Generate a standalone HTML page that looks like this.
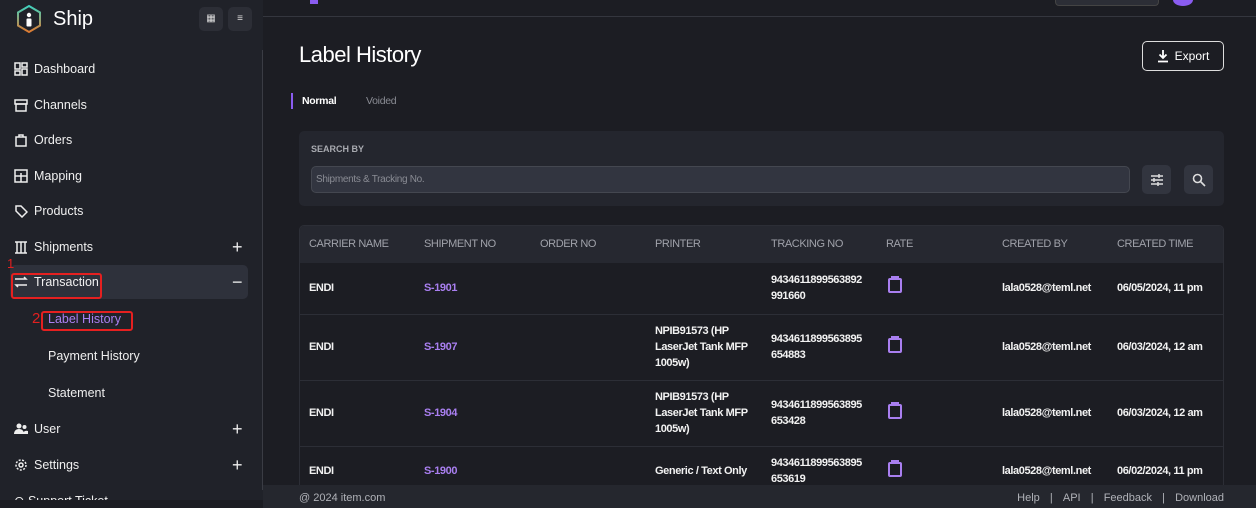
<!DOCTYPE html><html><head><style>
*{margin:0;padding:0;box-sizing:border-box}
body{width:1256px;height:508px;overflow:hidden;background:#1c1d23;font-family:"Liberation Sans",sans-serif;color:#fff;position:relative}
.sb{position:absolute;left:0;top:0;width:263px;height:508px;background:#202229}
.vl{position:absolute;left:262px;top:50px;width:1px;height:440px;background:#3a3c44}
.logo{position:absolute;left:15px;top:4px}
.ship{position:absolute;left:53px;top:8px;font-size:20px}
.tb{position:absolute;top:7px;width:24px;height:24px;background:#2c2e36;border-radius:5px;color:#ddd;font-size:10px;text-align:center;line-height:24px}
.ni{position:absolute;left:14px;font-size:12.5px;color:#f0f0f0;display:flex;align-items:center;gap:6px}
.ni svg{width:14px;height:14px}
.plus{position:absolute;left:232px;font-size:18px;color:#eee;font-weight:300}
.sub{position:absolute;left:48px;font-size:12.5px;color:#eee}
.top{position:absolute;left:263px;top:0;right:0;height:17px;border-bottom:1px solid #34363e;background:#1c1d23}
h1{position:absolute;left:299px;top:42px;font-size:22px;font-weight:400;letter-spacing:-.5px}
.exp{position:absolute;left:1142px;top:41px;width:82px;height:30px;border:1px solid #ddd;border-radius:5px;font-size:12px;display:flex;align-items:center;justify-content:center;gap:6px}
.card{position:absolute;left:299px;top:131px;width:925px;height:75px;background:#24262e;border-radius:5px}
.inp{position:absolute;left:311px;top:166px;width:819px;height:27px;background:#323540;border:1px solid #444750;border-radius:5px;font-size:10px;color:#8a8c94;padding:7px 4px;letter-spacing:-.3px}
.ib{position:absolute;top:165px;width:29px;height:29px;background:#32353f;border-radius:5px;display:flex;align-items:center;justify-content:center}
.tbl{position:absolute;left:299px;top:225px;width:925px;height:265px;border:1px solid #2c2e36;border-radius:5px;overflow:hidden}
.th{position:absolute;left:0;top:0;width:100%;height:37px;background:#262830}
.c{position:absolute;font-size:11px;letter-spacing:-.4px;line-height:16px}
.h{color:#a0a2aa;top:10px}
.row{position:absolute;left:0;width:100%;border-top:1px solid #2c2e36}
.b{font-weight:bold;color:#f2f2f2}
.p{color:#a97ff0;font-weight:bold}
.foot{position:absolute;left:263px;top:485px;right:0;height:23px;background:#25272e;font-size:11px;color:#b0b2b8}
</style></head><body>
<div class="sb"></div><div class="vl"></div>
<svg class="logo" width="28" height="30" viewBox="0 0 28 30"><defs><linearGradient id="g" x1="0" y1="0" x2="0" y2="1"><stop offset="0" stop-color="#3ed3c0"/><stop offset="1" stop-color="#e07a30"/></linearGradient></defs><path d="M14 2L25 8.5V21.5L14 28L3 21.5V8.5Z" fill="none" stroke="url(#g)" stroke-width="2"/><circle cx="14" cy="11" r="2.2" fill="#fff"/><rect x="11.5" y="14.5" width="5" height="8" rx="1" fill="#fff"/></svg>
<div class="ship">Ship</div>
<div class="tb" style="left:199px">▦</div><div class="tb" style="left:228px">≡</div>
<div class="ni" style="top:62px"><svg viewBox="0 0 14 14" fill="none" stroke="#eee" stroke-width="1.5"><rect x="1" y="1" width="5" height="6"/><rect x="8" y="1" width="5" height="4"/><rect x="1" y="9" width="5" height="4"/><rect x="8" y="7" width="5" height="6"/></svg>Dashboard</div>
<div class="ni" style="top:98px"><svg viewBox="0 0 14 14" fill="none" stroke="#eee" stroke-width="1.5"><rect x="1" y="2" width="12" height="4"/><rect x="2" y="6" width="10" height="7"/></svg>Channels</div>
<div class="ni" style="top:133px"><svg viewBox="0 0 14 14" fill="none" stroke="#eee" stroke-width="1.5"><rect x="2" y="4" width="10" height="9"/><path d="M5 4V2h4v2"/></svg>Orders</div>
<div class="ni" style="top:169px"><svg viewBox="0 0 14 14" fill="none" stroke="#eee" stroke-width="1.5"><rect x="1" y="1" width="12" height="12"/><path d="M1 7h12M7 4v9"/></svg>Mapping</div>
<div class="ni" style="top:204px"><svg viewBox="0 0 14 14" fill="none" stroke="#eee" stroke-width="1.5"><path d="M2 2h5l6 6-5 5-6-6z"/></svg>Products</div>
<div class="ni" style="top:240px"><svg viewBox="0 0 14 14" fill="none" stroke="#eee" stroke-width="1.5"><path d="M1 2h12M1 13h12M3 2v11M7 2v11M11 2v11"/></svg>Shipments</div>
<div class="plus" style="top:237px">+</div>
<div style="position:absolute;left:10px;top:265px;width:238px;height:34px;background:#2e313b;border-radius:5px"></div>
<div style="position:absolute;left:7px;top:256px;color:#e02020;font-size:13px">1</div>
<div style="position:absolute;left:11px;top:273px;width:91px;height:26px;border:2px solid #e52020;border-radius:3px"></div>
<div class="ni" style="top:275px"><svg viewBox="0 0 14 14" fill="none" stroke="#eee" stroke-width="1.5"><path d="M1 4h11l-2-2M13 10H2l2 2"/></svg>Transaction</div>
<div class="plus" style="top:272px">−</div>
<div style="position:absolute;left:32px;top:310px;color:#e02020;font-size:15px">2</div>
<div style="position:absolute;left:41px;top:311px;width:92px;height:20px;border:2px solid #e52020;border-radius:3px"></div>
<div class="sub" style="top:312px;color:#a97ff0">Label History</div>
<div class="sub" style="top:349px">Payment History</div>
<div class="sub" style="top:386px">Statement</div>
<div class="ni" style="top:422px"><svg viewBox="0 0 14 14" fill="#eee"><circle cx="5" cy="4" r="2.5"/><path d="M0 12c0-3 2-5 5-5s5 2 5 5z"/><circle cx="10.5" cy="5" r="2"/><path d="M9 12c0-2 2-4 5-3v3z"/></svg>User</div>
<div class="plus" style="top:419px">+</div>
<div class="ni" style="top:458px"><svg viewBox="0 0 14 14" fill="none" stroke="#eee" stroke-width="1.5"><circle cx="7" cy="7" r="2"/><circle cx="7" cy="7" r="5" stroke-dasharray="2 1.5"/></svg>Settings</div>
<div class="plus" style="top:455px">+</div>
<div style="position:absolute;left:0;top:490px;width:263px;height:11px;overflow:hidden"><div class="ni" style="top:3px">⊙ Support Ticket</div></div>
<div style="position:absolute;left:0;top:500px;width:263px;height:8px;background:#1c1d23"></div>
<div class="top"><div style="position:absolute;left:47px;top:0;width:8px;height:4px;background:#8a5cf0"></div><div style="position:absolute;left:792px;top:0;width:104px;height:6px;background:#2c2e36;border:1px solid #444;border-top:0;border-radius:0 0 4px 4px"></div><div style="position:absolute;left:910px;top:-6px;width:20px;height:12px;background:#8a5cf0;border-radius:50%"></div></div>
<h1>Label History</h1>
<div class="exp"><svg width="12" height="14" viewBox="0 0 12 14" fill="none" stroke="#fff" stroke-width="1.8"><path d="M6 1v8M2.5 5.5L6 9l3.5-3.5M1 12.5h10"/></svg>Export</div>
<div style="position:absolute;left:291px;top:93px;width:2px;height:16px;background:#8a5cf0"></div>
<div style="position:absolute;left:302px;top:95px;font-size:10.5px;font-weight:bold;letter-spacing:-.3px">Normal</div>
<div style="position:absolute;left:366px;top:95px;font-size:10.5px;color:#8a8c94;letter-spacing:-.3px">Voided</div>
<div class="card"></div>
<div style="position:absolute;left:311px;top:144px;font-size:9px;font-weight:bold;color:#a8aab0">SEARCH BY</div>
<div class="inp">Shipments &amp; Tracking No.</div>
<div class="ib" style="left:1142px"><svg width="14" height="14" viewBox="0 0 14 14" stroke="#ddd" stroke-width="1.5"><path d="M1 3h12M1 7h12M1 11h12M9 1v4M4 5v4M8 9v4"/></svg></div>
<div class="ib" style="left:1184px"><svg width="14" height="14" viewBox="0 0 14 14" fill="none" stroke="#ddd" stroke-width="1.6"><circle cx="5.5" cy="5.5" r="4"/><path d="M8.5 8.5L13 13"/></svg></div>
<div class="tbl">
<div class="th"></div>
<div class="c h" style="left:9px">CARRIER NAME</div><div class="c h" style="left:124px">SHIPMENT NO</div><div class="c h" style="left:240px">ORDER NO</div><div class="c h" style="left:355px">PRINTER</div><div class="c h" style="left:471px">TRACKING NO</div><div class="c h" style="left:586px">RATE</div><div class="c h" style="left:702px">CREATED BY</div><div class="c h" style="left:817px">CREATED TIME</div>
<div class="row" style="top:37px;height:51px;border-top:0"><div class="c b" style="left:9px;top:17px">ENDI</div><div class="c p" style="left:124px;top:17px">S-1901</div><div class="c b" style="left:471px;top:9px">9434611899563892<br>991660</div><svg class="c" style="left:588px;top:13px" width="14" height="17" viewBox="0 0 14 17" fill="none" stroke="#a97ff0" stroke-width="2"><rect x="1" y="3" width="12" height="13" rx="1"/><path d="M4 3V1h6v2"/></svg><div class="c b" style="left:702px;top:17px">lala0528@teml.net</div><div class="c b" style="left:817px;top:17px">06/05/2024, 11 pm</div></div>
<div class="row" style="top:88px;height:66px"><div class="c b" style="left:9px;top:24px">ENDI</div><div class="c p" style="left:124px;top:24px">S-1907</div><div class="c b" style="left:355px;top:8px">NPIB91573 (HP<br>LaserJet Tank MFP<br>1005w)</div><div class="c b" style="left:471px;top:16px">9434611899563895<br>654883</div><svg class="c" style="left:588px;top:21px" width="14" height="17" viewBox="0 0 14 17" fill="none" stroke="#a97ff0" stroke-width="2"><rect x="1" y="3" width="12" height="13" rx="1"/><path d="M4 3V1h6v2"/></svg><div class="c b" style="left:702px;top:24px">lala0528@teml.net</div><div class="c b" style="left:817px;top:24px">06/03/2024, 12 am</div></div>
<div class="row" style="top:154px;height:66px"><div class="c b" style="left:9px;top:24px">ENDI</div><div class="c p" style="left:124px;top:24px">S-1904</div><div class="c b" style="left:355px;top:8px">NPIB91573 (HP<br>LaserJet Tank MFP<br>1005w)</div><div class="c b" style="left:471px;top:16px">9434611899563895<br>653428</div><svg class="c" style="left:588px;top:21px" width="14" height="17" viewBox="0 0 14 17" fill="none" stroke="#a97ff0" stroke-width="2"><rect x="1" y="3" width="12" height="13" rx="1"/><path d="M4 3V1h6v2"/></svg><div class="c b" style="left:702px;top:24px">lala0528@teml.net</div><div class="c b" style="left:817px;top:24px">06/03/2024, 12 am</div></div>
<div class="row" style="top:220px;height:50px"><div class="c b" style="left:9px;top:16px">ENDI</div><div class="c p" style="left:124px;top:16px">S-1900</div><div class="c b" style="left:355px;top:16px">Generic / Text Only</div><div class="c b" style="left:471px;top:8px">9434611899563895<br>653619</div><svg class="c" style="left:588px;top:13px" width="14" height="17" viewBox="0 0 14 17" fill="none" stroke="#a97ff0" stroke-width="2"><rect x="1" y="3" width="12" height="13" rx="1"/><path d="M4 3V1h6v2"/></svg><div class="c b" style="left:702px;top:16px">lala0528@teml.net</div><div class="c b" style="left:817px;top:16px">06/02/2024, 11 pm</div></div>
</div>
<div class="foot"><span style="position:absolute;left:36px;top:7px">@ 2024 item.com</span><span style="position:absolute;right:32px;top:7px;word-spacing:2px">Help &nbsp;| &nbsp;API &nbsp;| &nbsp;Feedback &nbsp;| &nbsp;Download</span></div>
</body></html>
